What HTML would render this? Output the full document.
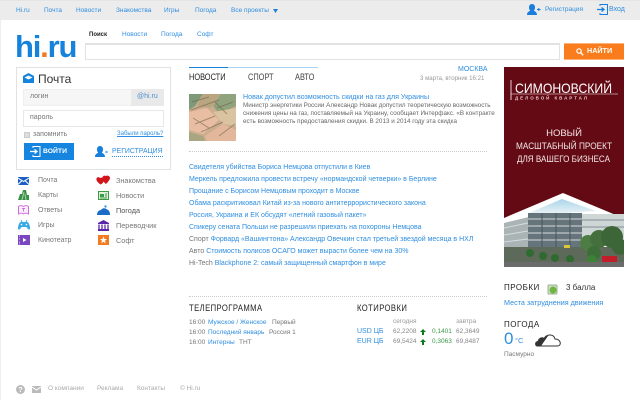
<!DOCTYPE html>
<html lang="ru"><head><meta charset="utf-8"><title>hi.ru</title>
<style>
html,body{margin:0;padding:0;background:#fff}
#p{position:relative;width:640px;height:400px;overflow:hidden;background:#fff;font-family:"Liberation Sans",sans-serif;font-size:7px;color:#666}
#p>*,.a{position:absolute;white-space:nowrap}
.t{line-height:10px;height:10px}
.n{font-size:6.500px}
.l{font-size:7px}
.b{color:#2f8ee0}
.g{color:#777}
.d{color:#222}
.h{font-size:9px;color:#222;letter-spacing:.5px;line-height:11px;transform-origin:0 0}
.tab{font-size:9.500px;letter-spacing:0;transform:scaleX(.78)}
.s{transform:scaleX(.85)}
svg{display:block}
</style></head><body><div id="p">
<div style="left:0;top:0;width:640px;height:20px;background:#ececec;border-top:1px solid #e4e4e4;box-sizing:border-box"></div>
<div style="left:0;top:20px;width:1px;height:380px;background:#eee"></div>

<span class="t b n" style="left:16px;top:6px">Hi.ru</span>
<span class="t b n" style="left:44px;top:6px">Почта</span>
<span class="t b n" style="left:76px;top:6px">Новости</span>
<span class="t b n" style="left:116px;top:6px">Знакомства</span>
<span class="t b n" style="left:164px;top:6px">Игры</span>
<span class="t b n" style="left:195px;top:6px">Погода</span>
<span class="t b n" style="left:231px;top:6px">Все проекты</span>
<svg style="left:273px;top:9px" width="5" height="4"><path d="M0 0H5L2.500 4Z" fill="#1f7fd8"/></svg>

<svg style="left:527px;top:4px" width="14" height="11" viewBox="0 0 14 11"><path d="M5 0C7 0 8 1.500 8 3.500C8 5 7.500 6 6.800 6.800C8 7.500 10 8 10 11H0C0 8 2 7.500 3.200 6.800C2.500 6 2 5 2 3.500C2 1.500 3 0 5 0Z" fill="#1a7fdc"/><path d="M10 5.500H13.500M11.800 4V7" stroke="#1a7fdc" fill="none"/></svg>
<span class="t b n" style="left:545px;top:5px">Регистрация</span>
<svg style="left:597px;top:4px" width="11" height="11" viewBox="0 0 11 11"><path d="M3 2V.5H10.500V10.500H3V9" stroke="#1a7fdc" fill="none"/><path d="M0 5.500H6M4.500 3.500L7 5.500L4.500 7.500" stroke="#1a7fdc" stroke-width="1.300" fill="none"/></svg>
<span class="t b" style="left:609px;top:5px">Вход</span>

<span style="left:15px;top:27px;font-size:31px;line-height:40px;font-weight:bold;color:#1582dc;letter-spacing:-1.200px">hi<span style="color:#f47a1f">.</span>ru</span>

<span class="t d" style="left:89px;top:30px;font-weight:bold;font-size:6px">Поиск</span>
<span class="t b n" style="left:122px;top:30px">Новости</span>
<span class="t b n" style="left:161px;top:30px">Погода</span>
<span class="t b n" style="left:197px;top:30px">Софт</span>

<div style="left:85px;top:43px;width:475px;height:17px;box-sizing:border-box;border:1px solid #e2e2e2;border-top:2px solid #e2e2e2;background:#fff"></div>
<div style="left:564px;top:43px;width:60px;height:17px;background:#f97d1c;border-top:1px solid #fbb27a;border-bottom:1px solid #fbb27a;box-sizing:border-box"></div>
<svg style="left:576px;top:48px" width="8" height="8" viewBox="0 0 8 8"><circle cx="3" cy="3" r="2.200" stroke="#fff" stroke-width="1.200" fill="none"/><path d="M4.700 4.700L7.200 7.200" stroke="#fff" stroke-width="1.500"/></svg>
<span class="t" style="left:587px;top:46px;color:#fff;font-weight:bold;font-size:7.200px">НАЙТИ</span>

<!-- mail box -->
<div style="left:16px;top:67px;width:155px;height:103px;box-sizing:border-box;border:1px solid #e2e2e2"></div>
<svg style="left:23px;top:73px" width="11" height="10" viewBox="0 0 11 10"><path d="M0 3L5.500 0L11 3V10H0Z" fill="#1582dc"/><path d="M1.500 4.500L5.500 2.500L9.500 4.500L5.500 6.500Z" fill="#fff"/></svg>
<span style="left:38px;top:72px;font-size:12px;line-height:14px;color:#333">Почта</span>
<div style="left:23px;top:89px;width:141px;height:17px;background:#f6f6f6;box-sizing:border-box;border:1px solid #efefef"></div>
<div style="left:131px;top:89px;width:33px;height:17px;background:#e9e9e9"></div>
<span class="t g" style="left:30px;top:92px">логин</span>
<span class="t b" style="left:137px;top:92px;color:#4a90d0">@hi.ru</span>
<div style="left:23px;top:110px;width:141px;height:17px;background:#fff;box-sizing:border-box;border:1px solid #e8e8e8"></div>
<span class="t g" style="left:30px;top:113px">пароль</span>
<div style="left:24px;top:132px;width:6px;height:6px;background:#ddd;border:1px solid #ccc;box-sizing:border-box"></div>
<span class="t g" style="left:33px;top:130px">запомнить</span>
<span class="t b" style="left:117px;top:129px;font-size:6px;text-decoration:underline">Забыли пароль?</span>
<div style="left:24px;top:143px;width:50px;height:17px;background:#1585e0"></div>
<svg style="left:30px;top:146px" width="11" height="11" viewBox="0 0 11 11"><path d="M3 2V.5H10V10.500H3V9" stroke="#fff" fill="none"/><path d="M0 5.500H6M4.500 3.500L7 5.500L4.500 7.500" stroke="#fff" stroke-width="1.300" fill="none"/></svg>
<span class="t" style="left:43px;top:147px;color:#fff;font-weight:bold;font-size:6.800px">ВОЙТИ</span>
<svg style="left:95px;top:146px" width="13" height="11" viewBox="0 0 13 11"><path d="M5 0C7 0 8 1.500 8 3.500C8 5 7.500 6 6.800 6.800C8 7.500 10 8 10 11H0C0 8 2 7.500 3.200 6.800C2.500 6 2 5 2 3.500C2 1.500 3 0 5 0Z" fill="#1a7fdc"/><circle cx="11.500" cy="6" r="1.300" fill="#6db3ee"/></svg>
<span class="t b" style="left:112px;top:147px;border-bottom:1px dotted #2f8ee0;font-size:6.900px;height:9px;line-height:9px">РЕГИСТРАЦИЯ</span>

<!-- services -->
<svg style="left:18px;top:177px" width="11" height="8"><rect width="11" height="8" fill="#1b5fc4"/><path d="M0 1L5.500 4.500L11 1M0 7.500L4 3.500M11 7.500L7 3.500" stroke="#fff" fill="none"/></svg>
<span class="t g" style="left:38px;top:176px">Почта</span>
<svg style="left:96px;top:175px" width="14" height="11"><path d="M4 3C2 1 0 3 .5 5C1 7 4 9 4.500 9.500C6 9 8 7 8 5C8 3 6 2 4 3Z" fill="#d4141c"/><path d="M9.500 1C8 0 6 1.500 6.500 4C7 6 9 8.500 10 9C11 8 14 5 14 3C14 1 11.500 0 9.500 1Z" fill="#d4141c"/></svg>
<span class="t g" style="left:116px;top:176px;font-size:7.300px">Знакомства</span>

<svg style="left:18px;top:190px" width="11" height="10"><path d="M0 10L2 4H4L5 0H8L9 5H11V10Z" fill="#3a9046"/><path d="M4 10L6 2M8 10L7 4" stroke="#a8d6ae" fill="none"/></svg>
<span class="t g" style="left:38px;top:191px">Карты</span>
<svg style="left:98px;top:191px" width="11" height="9"><rect x=".5" y=".5" width="10" height="8" fill="#dff1dd" stroke="#3b9a44"/><rect x="2" y="3" width="4" height="3" fill="#3b9a44"/><path d="M7 3H9M7 5H9M2 7H9" stroke="#3b9a44"/></svg>
<span class="t g" style="left:116px;top:191px;font-size:7.300px">Новости</span>

<svg style="left:18px;top:205px" width="11" height="10"><path d="M.5 1.500C2 .5 4 .5 5.500 1.500C7 .5 9 .5 10.500 1.500V9C9 8 7 8 5.500 9C4 8 2 8 .5 9Z" fill="#fbeefb" stroke="#cf6fdc"/><path d="M4 3.500H7M5.500 3.500V6.500" stroke="#cf6fdc"/></svg>
<span class="t g" style="left:38px;top:206px">Ответы</span>
<svg style="left:97px;top:205px" width="13" height="10"><path d="M0 10C0 7 2 5 4 5C5 3 8 2.500 10 4.500C12 5 13 7 13 10Z" fill="#1b6cc8"/><circle cx="8.500" cy="1.500" r="1.200" fill="#4a9be0"/></svg>
<span class="t g" style="left:116px;top:206px;color:#555;font-size:7.300px">Погода</span>

<svg style="left:18px;top:220px" width="12" height="10"><path d="M3 2H9C11 2 12 6 12 8.500C12 10 10.500 10 9.500 8.500L8.500 7H3.500L2.500 8.500C1.500 10 0 10 0 8.500C0 6 1 2 3 2Z" fill="#39a9e8"/><path d="M3 0L4 2M9 0L8 2" stroke="#39a9e8"/><circle cx="3.500" cy="4.500" r=".8" fill="#fff"/><circle cx="8.500" cy="4.500" r=".8" fill="#fff"/></svg>
<span class="t g" style="left:38px;top:221px">Игры</span>
<svg style="left:98px;top:220px" width="11" height="11"><path d="M5.500 0L11 3V4H0V3Z" fill="#5a25a8"/><path d="M1 4.500V9M4 4.500V9M7 4.500V9M10 4.500V9" stroke="#5a25a8" stroke-width="1.300"/><rect y="9" width="11" height="2" fill="#5a25a8"/></svg>
<span class="t g" style="left:116px;top:221px;font-size:7.300px">Переводчик</span>

<svg style="left:18px;top:235px" width="12" height="10"><rect width="12" height="10" fill="#7a47c0"/><path d="M5 3L8.500 5L5 7Z" fill="#fff"/><path d="M1 1H2M1 4H2M1 7H2M1 9H2" stroke="#d9c8f0"/></svg>
<span class="t g" style="left:38px;top:236px">Кинотеатр</span>
<svg style="left:98px;top:235px" width="11" height="10"><rect width="11" height="10" fill="#f47a1f"/><path d="M5.500 1.500L6.500 4H9L7 5.700L7.800 8.400L5.500 6.800L3.200 8.400L4 5.700L2 4H4.500Z" fill="#fff"/></svg>
<span class="t g" style="left:116px;top:236px;font-size:7.300px">Софт</span>

<!-- tabs -->
<div style="left:189px;top:67px;width:129px;height:1px;background:#a9d3f5"></div>
<div style="left:189px;top:67px;width:39px;height:1px;background:#1582dc"></div>
<span class="h tab" style="left:189px;top:72px">НОВОСТИ</span>
<span class="h tab" style="left:248px;top:72px;color:#444">СПОРТ</span>
<span class="h tab" style="left:295px;top:72px;color:#444">АВТО</span>
<span class="t b" style="left:458px;top:65px">МОСКВА</span>
<span class="t" style="left:420px;top:74px;color:#999;font-size:6.100px">3 марта, вторник 16:21</span>

<svg style="left:189px;top:94px" width="47" height="47" viewBox="0 0 47 47"><rect width="47" height="47" fill="#cbae8e"/><path d="M0 0H14L6 12L0 16Z" fill="#7f9a78"/><path d="M14 0H32L22 14L8 12Z" fill="#b9a680"/><path d="M32 0H47V12L30 20L24 12Z" fill="#8fa37c"/><path d="M0 18L18 14L30 26L14 40L0 36Z" fill="#e8bda2"/><path d="M24 18L47 14V32L34 30Z" fill="#d9c3a0"/><path d="M16 42L34 30L47 36V47H18Z" fill="#e3b79b"/><path d="M0 38L14 42L16 47H0Z" fill="#a9a583"/><path d="M3 8L20 3M2 16L30 6M28 14L44 8M6 30L26 22M12 38L34 28M30 42L46 30M4 24L20 34M26 8L38 20" stroke="#6d5d48" stroke-opacity=".55" fill="none"/></svg>
<span class="t b" style="left:243px;top:92px;font-size:7.100px">Новак допустил возможность скидки на газ для Украины</span>
<span class="t" style="left:243px;top:101px;color:#666;font-size:6.300px">Министр энергетики России Александр Новак допустил теоретическую возможность</span>
<span class="t" style="left:243px;top:109px;color:#666;font-size:6.300px">снижения цены на газ, поставляемый на Украину, сообщает Интерфакс. «В контракте</span>
<span class="t" style="left:243px;top:117px;color:#666;font-size:6.300px">есть возможность предоставления скидки. В 2013 и 2014 году эта скидка</span>

<div style="left:189px;top:151px;width:298px;border-top:1px dotted #ccc"></div>

<span class="t b" style="left:189px;top:163px">Свидетеля убийства Бориса Немцова отпустили в Киев</span>
<span class="t b" style="left:189px;top:175px">Меркель предложила провести встречу «нормандской четверки» в Берлине</span>
<span class="t b" style="left:189px;top:187px">Прощание с Борисом Немцовым проходит в Москве</span>
<span class="t b" style="left:189px;top:199px">Обама раскритиковал Китай из-за нового антитеррористического закона</span>
<span class="t b" style="left:189px;top:211px">Россия, Украина и ЕК обсудят «летний газовый пакет»</span>
<span class="t b" style="left:189px;top:223px">Спикеру сената Польши не разрешили приехать на похороны Немцова</span>
<span class="t g" style="left:189px;top:235px">Спорт <span class="b">Форвард «Вашингтона» Александр Овечкин стал третьей звездой месяца в НХЛ</span></span>
<span class="t g" style="left:189px;top:247px">Авто <span class="b">Стоимость полисов ОСАГО может вырасти более чем на 30%</span></span>
<span class="t g" style="left:189px;top:259px">Hi-Tech <span class="b">Blackphone 2: самый защищенный смартфон в мире</span></span>

<div style="left:189px;top:296px;width:298px;border-top:1px dotted #ccc"></div>

<span class="h s" style="left:189px;top:303px">ТЕЛЕПРОГРАММА</span>
<span class="t g n" style="left:189px;top:318px">16:00</span><span class="t b n" style="left:208px;top:318px">Мужское / Женское</span><span class="t g n" style="left:272px;top:318px">Первый</span>
<span class="t g n" style="left:189px;top:328px">16:00</span><span class="t b n" style="left:208px;top:328px">Последний январь</span><span class="t g n" style="left:269px;top:328px">Россия 1</span>
<span class="t g n" style="left:189px;top:338px">16:00</span><span class="t b n" style="left:208px;top:338px">Интерны</span><span class="t g n" style="left:239px;top:338px">ТНТ</span>

<span class="h s" style="left:357px;top:303px">КОТИРОВКИ</span>
<span class="t n" style="left:393px;top:317px;color:#999">сегодня</span>
<span class="t n" style="left:456px;top:317px;color:#999">завтра</span>
<span class="t b" style="left:357px;top:327px">USD ЦБ</span>
<span class="t n" style="left:393px;top:327px;color:#888">62,2208</span>
<svg style="left:420px;top:329px" width="6" height="6"><path d="M3 0L6 3H4V6H2V3H0Z" fill="#0c7a1c"/></svg>
<span class="t n" style="left:432px;top:327px;color:#3a9a46">0,1401</span>
<span class="t n" style="left:456px;top:327px;color:#888">62,3649</span>
<span class="t b" style="left:357px;top:337px">EUR ЦБ</span>
<span class="t n" style="left:393px;top:337px;color:#888">69,5424</span>
<svg style="left:420px;top:339px" width="6" height="6"><path d="M3 0L6 3H4V6H2V3H0Z" fill="#0c7a1c"/></svg>
<span class="t n" style="left:432px;top:337px;color:#3a9a46">0,3063</span>
<span class="t n" style="left:456px;top:337px;color:#888">69,8487</span>

<!-- banner -->
<svg style="left:504px;top:67px" width="120" height="200" viewBox="0 0 120 200">
<defs>
<linearGradient id="sky" x1="0" y1="0" x2="0" y2="1"><stop offset="0" stop-color="#a9d4ea"/><stop offset="1" stop-color="#e6f1f5"/></linearGradient>
</defs>
<rect width="120" height="200" fill="#640a14"/>
<path d="M0 151L59 126L119 151V200H0Z" fill="#fff"/>
<path d="M25 146L58 132L92 144L60 146Z" fill="url(#sky)"/>
<path d="M0 156L25 150V180H0Z" fill="#aab4b4"/>
<path d="M24 146H78V184H24Z" fill="#66757c"/>
<path d="M78 147L120 147V176H78Z" fill="#cfd6d6"/>
<path d="M24 152H78M24 159H78M24 166H78M24 173H78M0 161L24 156M0 168L24 164M0 175L24 172" stroke="#d5dcdd" fill="none"/>
<path d="M78 153H120M78 160H120" stroke="#838f92" fill="none"/>
<path d="M38 146V184M52 146V184M66 146V184" stroke="#47565c" fill="none"/>
<rect y="180" width="120" height="20" fill="#5d6a5a"/>
<circle cx="84" cy="176" r="8" fill="#4d7d45"/><circle cx="95" cy="172" r="9" fill="#45703e"/><circle cx="108" cy="170" r="11" fill="#3c6638"/><circle cx="116" cy="180" r="8" fill="#3c6638"/><circle cx="90" cy="186" r="7" fill="#3d6d38"/>
<circle cx="26" cy="186" r="4" fill="#2f6a30"/><circle cx="39" cy="189" r="4" fill="#2f6a30"/><circle cx="51" cy="191" r="4" fill="#2f6a30"/><circle cx="66" cy="192" r="4" fill="#2f6a30"/><circle cx="88" cy="193" r="5" fill="#3b8236"/>
<rect x="98" y="189" width="15" height="6" fill="#c21e2a"/><rect x="60" y="178" width="6" height="3" fill="#d8c83a"/>
<rect x="0" y="195" width="120" height="5" fill="#6a6c6c"/>
<path d="M7 13V33" stroke="#fff" stroke-width=".8" fill="none"/>
<text x="11" y="26" font-family="Liberation Sans" font-size="14" fill="#fff" textLength="97" lengthAdjust="spacingAndGlyphs">СИМОНОВСКИЙ</text>
<path d="M7 27H114" stroke="#fff" stroke-width=".6"/>
<text x="11" y="32.500" font-family="Liberation Sans" font-size="4.500" fill="#e8cfcf" font-weight="bold" textLength="72">ДЕЛОВОЙ КВАРТАЛ</text>
<text x="60" y="69" text-anchor="middle" font-family="Liberation Sans" font-size="9.500" fill="#f2e6e6">НОВЫЙ</text>
<text x="12" y="82" font-family="Liberation Sans" font-size="9.500" fill="#f2e6e6" textLength="96" lengthAdjust="spacingAndGlyphs">МАСШТАБНЫЙ ПРОЕКТ</text>
<text x="13" y="95" font-family="Liberation Sans" font-size="9.500" fill="#f2e6e6" textLength="93" lengthAdjust="spacingAndGlyphs">ДЛЯ ВАШЕГО БИЗНЕСА</text>
</svg>

<span class="h" style="left:504px;top:282px;font-size:8px">ПРОБКИ</span>
<svg style="left:547px;top:284px" width="11" height="11"><rect x="1" y="1" width="9" height="9" rx="1" fill="#cfe0c8" stroke="#9bb090"/><circle cx="6" cy="6" r="3.500" fill="#6fb542"/></svg>
<span class="t" style="left:566px;top:283px;color:#333;font-size:8px">3 балла</span>
<span class="t b" style="left:504px;top:298px;font-size:7.200px">Места затруднения движения</span>
<span class="h" style="left:504px;top:319px;font-size:8px">ПОГОДА</span>
<span style="left:504px;top:329px;font-size:17px;line-height:20px;color:#2f8ee0">0</span>
<span class="t b" style="left:515px;top:336px;font-size:7.500px">°C</span>
<svg style="left:535px;top:334px" width="26" height="13" viewBox="0 0 26 13"><path d="M2 12C0 11 0 8 3 7.500C4 4 7 3 9 4.500C12 -.5 19 0 20 5C24 5 26 8 25 10.500C24.500 12 23 12 22 12Z" fill="#fff" stroke="#333"/><path d="M1 12C0 9 2 7.500 3.500 7.500C4 4 6.500 2.500 9 4L11 1.500L13 2L6 12Z" fill="#333"/></svg>
<span class="t g" style="left:504px;top:350px;font-size:6.500px">Пасмурно</span>

<!-- footer -->
<svg style="left:16px;top:385px" width="9" height="9"><circle cx="4.500" cy="4.500" r="4.500" fill="#bbb"/><text x="4.500" y="7" text-anchor="middle" font-size="7" font-weight="bold" font-family="Liberation Sans" fill="#fff">?</text></svg>
<svg style="left:32px;top:386px" width="9" height="7"><rect width="9" height="7" fill="#bbb"/><path d="M0 1L4.500 4L9 1" stroke="#fff" fill="none"/></svg>
<span class="t n" style="left:48px;top:384px;color:#aaa">О компании</span>
<span class="t n" style="left:97px;top:384px;color:#aaa">Реклама</span>
<span class="t n" style="left:137px;top:384px;color:#aaa">Контакты</span>
<span class="t n" style="left:180px;top:384px;color:#aaa">© Hi.ru</span>
</div></body></html>
